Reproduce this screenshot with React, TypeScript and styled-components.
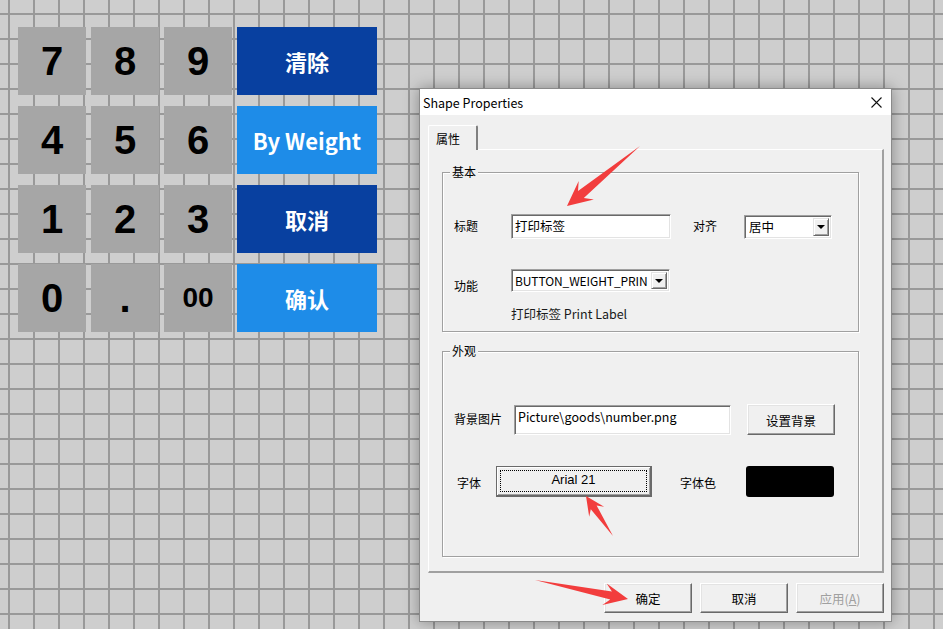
import styled, { createGlobalStyle } from "styled-components";

const GlobalStyle = createGlobalStyle`
  html, body {
    margin: 0;
    padding: 0;
    height: 100%;
  }

  body {
    font-family: "Noto Sans CJK SC", "Noto Sans", sans-serif;
    background-color: #cecece;
    background-image:
      linear-gradient(#999999 2px, transparent 2px),
      linear-gradient(90deg, #999999 2px, transparent 2px);
    background-size: 25px 25px;
    background-position: 8px 13px;
    overflow: hidden;
  }
`;

const keys = ["7", "8", "9", "4", "5", "6", "1", "2", "3", "0", ".", "00"];
const actions = [
  { label: "清除", dark: true },
  { label: "By Weight", dark: false },
  { label: "取消", dark: true },
  { label: "确认", dark: false },
];

type ArrowProps = {
  tail: [number, number];
  tip: [number, number];
  head: number;
  wing: number;
  shaft: number;
};

const arrowPoints = ({ tail, tip, head, wing, shaft }: ArrowProps) => {
  const [tx, ty] = tail;
  const [px, py] = tip;
  const len = Math.hypot(px - tx, py - ty);
  const ux = (px - tx) / len;
  const uy = (py - ty) / len;
  const nx = -uy;
  const ny = ux;
  const bx = px - ux * head;
  const by = py - uy * head;
  const jx = px - ux * head * 0.72;
  const jy = py - uy * head * 0.72;
  const pts = [
    [tx, ty],
    [jx + nx * shaft, jy + ny * shaft],
    [bx + nx * wing, by + ny * wing],
    [px, py],
    [bx - nx * wing, by - ny * wing],
    [jx - nx * shaft, jy - ny * shaft],
  ];
  return pts.map((p) => p.map((v) => v.toFixed(1)).join(",")).join(" ");
};

const arrows: ArrowProps[] = [
  { tail: [640, 146], tip: [567, 206], head: 25, wing: 12, shaft: 4.5 },
  { tail: [613, 536], tip: [586, 496], head: 19, wing: 9, shaft: 3.5 },
  { tail: [535, 580], tip: [628, 599], head: 24, wing: 11, shaft: 4 },
];

const App = () => {
  return (
    <>
      <GlobalStyle />
      <Canvas>
        <Keypad>
          {[0, 1, 2, 3].map((row) => (
            <KeyRow key={row}>
              {keys.slice(row * 3, row * 3 + 3).map((k) => (
                <Key key={k} $small={k === "00"}>
                  {k}
                </Key>
              ))}
              <ActionButton $dark={actions[row].dark}>{actions[row].label}</ActionButton>
            </KeyRow>
          ))}
        </Keypad>

        <Dialog>
          <TitleBar>
            <Title>Shape Properties</Title>
            <CloseButton>
              <svg width="11" height="11" viewBox="0 0 11 11">
                <path d="M0.5 0.5 L10.5 10.5 M10.5 0.5 L0.5 10.5" stroke="#111" strokeWidth="1.1" />
              </svg>
            </CloseButton>
          </TitleBar>

          <DialogBody>
            <TabStrip>
              <Tab>属性</Tab>
            </TabStrip>
            <TabPanel>
              <Group $height={160}>
                <Legend>基本</Legend>
                <FieldRow $top={41}>
                  <Label $width={57}>标题</Label>
                  <TextField $width={160} $height={25}>打印标签</TextField>
                  <Label $width={51} $left={22}>对齐</Label>
                  <Select $width={88} $height={24}>
                    <SelectText>居中</SelectText>
                    <DropButton>
                      <Caret />
                    </DropButton>
                  </Select>
                </FieldRow>
                <FieldRow $top={30}>
                  <Label $width={57} $shift={6}>功能</Label>
                  <Select $width={159} $height={23}>
                    <SelectText $tight>BUTTON_WEIGHT_PRIN</SelectText>
                    <DropButton>
                      <Caret />
                    </DropButton>
                  </Select>
                </FieldRow>
                <InfoText>打印标签 Print Label</InfoText>
              </Group>

              <Group $height={206}>
                <Legend>外观</Legend>
                <FieldRow $top={52}>
                  <Label $width={60}>背景图片</Label>
                  <TextField $width={217} $height={30}>Picture\goods\number.png</TextField>
                  <PushButton $width={88} $height={31} $left={16}>设置背景</PushButton>
                </FieldRow>
                <FieldRow $top={31}>
                  <Label $width={39} $left={3} $shift={2}>字体</Label>
                  <FontButton>Arial 21</FontButton>
                  <Label $width={66} $left={28} $shift={2}>字体色</Label>
                  <Swatch />
                </FieldRow>
              </Group>
            </TabPanel>

            <ButtonRow>
              <PushButton $width={88} $height={30}>确定</PushButton>
              <PushButton $width={88} $height={30}>取消</PushButton>
              <PushButton $width={88} $height={30} $disabled>
                应用(<u>A</u>)
              </PushButton>
            </ButtonRow>
          </DialogBody>
        </Dialog>

        <Overlay width="943" height="629" viewBox="0 0 943 629">
          {arrows.map((a, i) => (
            <polygon key={i} points={arrowPoints(a)} fill="#f23d3d" />
          ))}
        </Overlay>
      </Canvas>
    </>
  );
};

const Canvas = styled.div`
  position: relative;
  width: 943px;
  height: 629px;
`;

const Keypad = styled.div`
  display: flex;
  flex-direction: column;
  gap: 11px;
  padding: 27px 0 0 18px;
`;

const KeyRow = styled.div`
  display: flex;
  gap: 5px;
`;

const Key = styled.div<{ $small?: boolean }>`
  width: 68px;
  height: 68px;
  display: flex;
  align-items: center;
  justify-content: center;
  background: #a6a6a6;
  color: #000;
  font-family: "Liberation Sans", Arial, sans-serif;
  font-weight: bold;
  font-size: ${(p) => (p.$small ? "28px" : "40px")};
`;

const ActionButton = styled.div<{ $dark: boolean }>`
  width: 140px;
  height: 68px;
  display: flex;
  align-items: center;
  justify-content: center;
  background: ${(p) => (p.$dark ? "#0840a0" : "#1e8ce8")};
  color: #fff;
  font-family: "Noto Sans CJK SC", "Noto Sans", sans-serif;
  font-weight: bold;
  font-size: 22px;
`;

const Dialog = styled.div`
  position: absolute;
  left: 419px;
  top: 88px;
  width: 473px;
  height: 534px;
  box-sizing: border-box;
  border: 1px solid #8a8a8a;
  background: #f0f0f0;
  box-shadow: 0 0 14px rgba(0, 0, 0, 0.35);
  display: flex;
  flex-direction: column;
  font-size: 12px;
  color: #000;
`;

const TitleBar = styled.div`
  height: 26px;
  background: #ffffff;
  display: flex;
  align-items: center;
  justify-content: space-between;
  padding: 0 9px 0 3px;
`;

const Title = styled.span`
  font-size: 12.5px;
  padding-top: 1px;
`;

const CloseButton = styled.span`
  display: flex;
  align-items: center;
  margin-top: 1px;
`;

const DialogBody = styled.div`
  flex: 1;
  display: flex;
  flex-direction: column;
  padding: 10px 7px 8px 8px;
`;

const TabStrip = styled.div`
  display: flex;
  height: 24px;
`;

const Tab = styled.div`
  width: 50px;
  box-sizing: border-box;
  border-top: 1px solid #ffffff;
  border-left: 1px solid #ffffff;
  border-right: 2px solid #808080;
  border-radius: 2px 2px 0 0;
  padding: 4px 0 0 7px;
  background: #f0f0f0;
  position: relative;
  z-index: 1;
  height: 25px;
`;

const TabPanel = styled.div`
  width: 456px;
  height: 424px;
  box-sizing: border-box;
  border-top: 1px solid #ffffff;
  border-left: 1px solid #ffffff;
  border-right: 2px solid #a0a0a0;
  border-bottom: 2px solid #a0a0a0;
  padding: 22px 0 0 13px;
  display: flex;
  flex-direction: column;
  gap: 19px;
`;

const Group = styled.div<{ $height: number }>`
  position: relative;
  width: 417px;
  height: ${(p) => p.$height}px;
  box-sizing: border-box;
  border: 1px solid #a0a0a0;
  box-shadow: inset 1px 1px #ffffff, 1px 1px #ffffff;
  padding-left: 11px;
`;

const Legend = styled.span`
  position: absolute;
  left: 7px;
  top: -9px;
  padding: 0 2px;
  background: #f0f0f0;
  line-height: 16px;
`;

const FieldRow = styled.div<{ $top: number }>`
  display: flex;
  align-items: center;
  margin-top: ${(p) => p.$top}px;
`;

const Label = styled.span<{ $width: number; $left?: number; $shift?: number }>`
  width: ${(p) => p.$width}px;
  margin-left: ${(p) => p.$left ?? 0}px;
  flex-shrink: 0;
  position: relative;
  top: ${(p) => (p.$shift ?? 0) - 1}px;
`;

const sunken = `
  box-sizing: border-box;
  border-style: solid;
  border-width: 1px;
  border-color: #a0a0a0 #ffffff #ffffff #a0a0a0;
  box-shadow: inset 1px 1px #696969, inset -1px -1px #e3e3e3;
  background: #ffffff;
`;

const TextField = styled.div<{ $width: number; $height: number }>`
  ${sunken}
  width: ${(p) => p.$width}px;
  height: ${(p) => p.$height}px;
  padding: 3px 3px;
  font-size: 12.5px;
  line-height: 16px;
  white-space: nowrap;
  overflow: hidden;
`;

const Select = styled.div<{ $width: number; $height: number }>`
  ${sunken}
  width: ${(p) => p.$width}px;
  height: ${(p) => p.$height}px;
  display: flex;
  align-items: stretch;
  padding: 2px;
`;

const SelectText = styled.span<{ $tight?: boolean }>`
  flex: 1;
  padding-left: ${(p) => (p.$tight ? "1px" : "2px")};
  line-height: 17px;
  font-size: ${(p) => (p.$tight ? "12px" : "12.5px")};
  letter-spacing: ${(p) => (p.$tight ? "-0.1px" : "0")};
  white-space: nowrap;
  overflow: hidden;
`;

const DropButton = styled.span`
  width: 16px;
  flex-shrink: 0;
  box-sizing: border-box;
  background: #f0f0f0;
  border-style: solid;
  border-width: 1px;
  border-color: #e3e3e3 #696969 #696969 #e3e3e3;
  box-shadow: inset 1px 1px #ffffff, inset -1px -1px #a0a0a0;
  display: flex;
  align-items: center;
  justify-content: center;
`;

const Caret = styled.span`
  width: 0;
  height: 0;
  border-left: 4px solid transparent;
  border-right: 4px solid transparent;
  border-top: 4px solid #000;
  margin-top: 1px;
`;

const InfoText = styled.div`
  margin: 12px 0 0 57px;
  font-size: 12.5px;
  color: #1a1a1a;
`;

const PushButton = styled.div<{ $width: number; $height: number; $left?: number; $disabled?: boolean }>`
  width: ${(p) => p.$width}px;
  height: ${(p) => p.$height}px;
  margin-left: ${(p) => p.$left ?? 0}px;
  box-sizing: border-box;
  background: #f0f0f0;
  border-style: solid;
  border-width: 1px;
  border-color: #ffffff #696969 #696969 #ffffff;
  box-shadow: inset -1px -1px #a0a0a0, inset 1px 1px #e3e3e3;
  display: flex;
  align-items: center;
  justify-content: center;
  padding-top: 1px;
  color: ${(p) => (p.$disabled ? "#a0a0a0" : "#000")};
  font-size: 12.5px;

  u {
    text-decoration-thickness: 1px;
  }
`;

const FontButton = styled.div`
  position: relative;
  width: 156px;
  height: 31px;
  box-sizing: border-box;
  background: #f0f0f0;
  border: 1px solid #6a6a6a;
  border-right-width: 2px;
  border-bottom-width: 2px;
  box-shadow: inset 1px 1px #ffffff, inset -1px -1px #a0a0a0;
  display: flex;
  align-items: center;
  justify-content: center;
  padding-bottom: 3px;
  font-family: "Liberation Sans", Arial, sans-serif;
  font-size: 13px;

  &::after {
    content: "";
    position: absolute;
    inset: 3px;
    border: 1px dotted #000;
  }
`;

const Swatch = styled.div`
  width: 88px;
  height: 31px;
  background: #000;
  border-radius: 3px;
`;

const ButtonRow = styled.div`
  display: flex;
  justify-content: flex-end;
  gap: 8px;
  margin-top: auto;
`;

const Overlay = styled.svg`
  position: absolute;
  left: 0;
  top: 0;
  pointer-events: none;
`;

export default App;
